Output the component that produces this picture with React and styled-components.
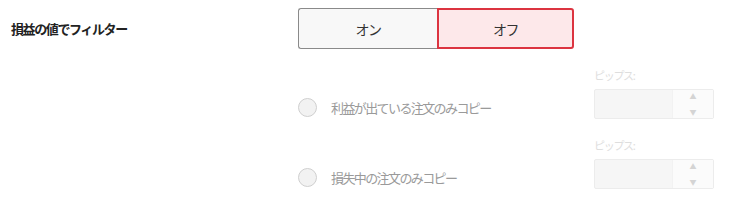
import React from "react";
import styled, { createGlobalStyle } from "styled-components";

const Global = createGlobalStyle`
  html, body { margin: 0; padding: 0; background: #fff; }
  body { font-family: "Noto Sans CJK JP", "Noto Sans", sans-serif; }
`;

const Page = styled.div`
  width: 732px;
  height: 212px;
  box-sizing: border-box;
  padding: 8px 0 0 11px;
  display: grid;
  grid-template-columns: 287px 296px 120px;
  grid-template-rows: 41px 70px 70px;
`;

const Title = styled.div`
  display: flex;
  align-items: center;
  font-size: 13px;
  font-weight: 700;
  letter-spacing: -1.4px;
  color: #222;
`;

const Segmented = styled.div`
  grid-column: 2 / 4;
  display: flex;
  width: 275px;
  height: 41px;
`;

const SegButton = styled.button`
  flex: ${(p) => (p.$active ? "0 0 137px" : "0 0 139px")};
  box-sizing: border-box;
  height: 41px;
  margin: 0;
  font-family: inherit;
  font-size: 14px;
  letter-spacing: -1.5px;
  color: #333;
  background: ${(p) => (p.$active ? "#fde8ea" : "#f8f8f8")};
  border: ${(p) => (p.$active ? "2px solid #dc3440" : "1px solid #8a8a8a")};
  border-radius: ${(p) => (p.$active ? "0 3px 3px 0" : "3px 0 0 3px")};
  ${(p) => (p.$active ? "" : "border-right: none;")}
  padding: 0;
`;

const Spacer = styled.div``;

const OptionCell = styled.div`
  display: flex;
  align-items: center;
  gap: 14px;
  padding-top: 48px;
  align-self: start;
  height: 20px;
`;

const Radio = styled.span`
  width: 19px;
  height: 19px;
  box-sizing: border-box;
  border-radius: 50%;
  border: 1px solid #cfcfcf;
  background: #f2f2f2;
  flex: none;
`;

const OptionText = styled.span`
  font-size: 13px;
  letter-spacing: -1.6px;
  color: #9a9a9a;
`;

const SpinGroup = styled.div`
  display: flex;
  flex-direction: column;
  gap: 7px;
  padding-top: 20px;
`;

const SpinLabel = styled.div`
  font-size: 11px;
  line-height: 13px;
  letter-spacing: -1.3px;
  color: #dedede;
`;

const SpinBox = styled.div`
  display: flex;
  height: 39px;
  box-sizing: border-box;
  border: 1px solid #ececec;
  border-radius: 2px;
  background: #f6f6f6;
`;

const SpinInput = styled.div`
  flex: 1;
`;

const SpinArrows = styled.div`
  width: 40px;
  background: #fbfbfb;
  border-left: 1px solid #f2f2f2;
  display: flex;
  flex-direction: column;
  align-items: center;
  justify-content: center;
  gap: 9px;
  font-size: 7px;
  line-height: 7px;
  color: #d4d4d4;
`;

function Option({ text }) {
  return (
    <>
      <Spacer />
      <OptionCell>
        <Radio />
        <OptionText>{text}</OptionText>
      </OptionCell>
      <SpinGroup>
        <SpinLabel>ピップス:</SpinLabel>
        <SpinBox>
          <SpinInput />
          <SpinArrows>
            <span>▲</span>
            <span>▼</span>
          </SpinArrows>
        </SpinBox>
      </SpinGroup>
    </>
  );
}

export default function App() {
  return (
    <>
      <Global />
      <Page>
        <Title>損益の値でフィルター</Title>
        <Segmented>
          <SegButton>オン</SegButton>
          <SegButton $active>オフ</SegButton>
        </Segmented>
        <Option text="利益が出ている注文のみコピー" />
        <Option text="損失中の注文のみコピー" />
      </Page>
    </>
  );
}
